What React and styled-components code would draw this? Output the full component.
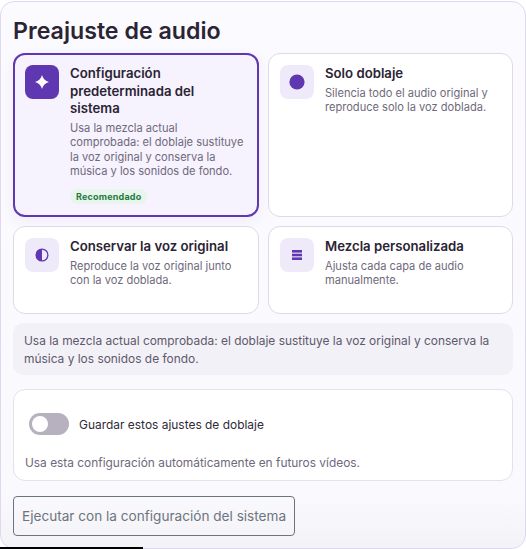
import React from "react";
import styled, { createGlobalStyle } from "styled-components";

const Global = createGlobalStyle`
  html, body { margin: 0; padding: 0; background: #fff; }
  body { font-family: "Inter", "Liberation Sans", sans-serif; width: 526px; height: 549px; overflow: hidden; -webkit-font-smoothing: antialiased; }
`;

const Panel = styled.section`
  position: relative;
  box-sizing: border-box;
  width: 526px;
  height: 548px;
  margin-top: 1px;
  padding: 14px 12px 0 12px;
  border: 1px solid #e0d8f1;
  border-radius: 14px;
  background: linear-gradient(180deg, #fbfaff 0%, #faf9fe 90%, #f3f2f7 100%);
  display: flex;
  flex-direction: column;
`;

const Title = styled.h2`
  margin: 0 0 7px 0;
  font-size: 23.2px;
  line-height: 30px;
  font-weight: 600;
  letter-spacing: 0;
  color: #2a2433;
`;

const Grid = styled.div`
  display: grid;
  grid-template-columns: 246px 245px;
  grid-template-rows: 164px 88px;
  gap: 9px;
`;

const Card = styled.div`
  box-sizing: border-box;
  display: flex;
  gap: 11px;
  padding: ${(p) => (p.$active ? "10px" : "11px")};
  border-radius: 12px;
  background: ${(p) => (p.$active ? "#f6f2fe" : "#ffffff")};
  border: ${(p) => (p.$active ? "2px solid #5f37b0" : "1px solid #dfd9ea")};
  ${(p) => (p.$active ? "box-shadow: 0 4px 14px rgba(95,55,176,0.07);" : "")}
`;

const IconBox = styled.div`
  flex: 0 0 34px;
  width: 34px;
  height: 34px;
  border-radius: 8px;
  display: flex;
  align-items: center;
  justify-content: center;
  background: ${(p) => (p.$active ? "#5f37b0" : "#efeafa")};
  color: ${(p) => (p.$active ? "#ffffff" : "#5f37b0")};
`;

const CardBody = styled.div`
  display: flex;
  flex-direction: column;
  align-items: flex-start;
  min-width: 0;
  flex: 1;
`;

const CardTitle = styled.div`
  font-size: 13.2px;
  line-height: 17.5px;
  font-weight: 600;
  color: #2a2433;
  margin-bottom: 3px;
`;

const CardText = styled.div`
  font-size: 11.08px;
  line-height: 14.6px;
  color: #6f697b;
`;

const Badge = styled.span`
  margin-top: 10px;
  padding: 0 6px;
  height: 15px;
  line-height: 15px;
  border-radius: 8px;
  font-size: 9px;
  font-weight: 700;
  letter-spacing: 0.2px;
  color: #237a3f;
  background: #e8f5ec;
`;

const Note = styled.div`
  box-sizing: border-box;
  margin-top: 9px;
  height: 52px;
  padding: 9px 11px;
  border-radius: 10px;
  background: #f3f1f8;
  font-size: 11.93px;
  line-height: 18px;
  color: #5f596b;
`;

const SaveCard = styled.div`
  box-sizing: border-box;
  margin-top: 14px;
  height: 92px;
  padding: 23px 11px 0 11px;
  border: 1px solid #e5e0ee;
  border-radius: 12px;
  background: #fff;
`;

const SaveRow = styled.label`
  display: flex;
  align-items: center;
  gap: 10px;
  padding-left: 4px;
  height: 22px;
  font-size: 11.95px;
  color: #2f2a38;
`;

const Track = styled.span`
  box-sizing: border-box;
  width: 40px;
  height: 22px;
  padding: 3px;
  border-radius: 11px;
  background: #b6b0bf;
  display: flex;
  align-items: center;
`;

const Knob = styled.span`
  width: 16px;
  height: 16px;
  border-radius: 50%;
  background: #fff;
`;

const SaveHint = styled.div`
  margin-top: 20px;
  font-size: 11.9px;
  line-height: 16px;
  color: #6f697b;
`;

const RunButton = styled.button`
  box-sizing: border-box;
  align-self: flex-start;
  margin-top: 15px;
  width: 282px;
  height: 40px;
  padding: 0 8px;
  border: 1px solid #6c757d;
  border-radius: 4px;
  background: transparent;
  font-family: inherit;
  font-size: 13.6px;
  color: #6c757d;
  white-space: nowrap;
`;

const EdgeBar = styled.div`
  position: absolute;
  left: -1px;
  bottom: -1px;
  width: 143px;
  height: 2px;
  background: #000;
`;

const Sparkle = () => (
  <svg width="16" height="16" viewBox="0 0 16 16" fill="currentColor">
    <path d="M8 1 C8.9 4.6 11.4 7.1 15 8 C11.4 8.9 8.9 11.4 8 15 C7.1 11.4 4.6 8.9 1 8 C4.6 7.1 7.1 4.6 8 1Z" />
  </svg>
);
const Dot = () => (
  <svg width="16" height="16" viewBox="0 0 16 16" fill="currentColor">
    <circle cx="8" cy="8" r="7.6" />
  </svg>
);
const HalfCircle = () => (
  <svg width="14" height="14" viewBox="0 0 14 14">
    <circle cx="7" cy="7" r="5.9" fill="none" stroke="currentColor" strokeWidth="1.3" />
    <path d="M7 1 A6 6 0 0 0 7 13Z" fill="currentColor" />
  </svg>
);
const Bars = () => (
  <svg width="12" height="12" viewBox="0 0 12 12" fill="currentColor">
    <rect x="1" y="1" width="10" height="2.6" />
    <rect x="1" y="4.7" width="10" height="2.6" />
    <rect x="1" y="8.4" width="10" height="2.6" />
  </svg>
);

const presets = [
  {
    icon: <Sparkle />,
    title: "Configuración predeterminada del sistema",
    text: "Usa la mezcla actual comprobada: el doblaje sustituye la voz original y conserva la música y los sonidos de fondo.",
    active: true,
    badge: "Recomendado",
  },
  { icon: <Dot />, title: "Solo doblaje", text: "Silencia todo el audio original y reproduce solo la voz doblada." },
  { icon: <HalfCircle />, title: "Conservar la voz original", text: "Reproduce la voz original junto con la voz doblada." },
  { icon: <Bars />, title: "Mezcla personalizada", text: "Ajusta cada capa de audio manualmente." },
];

export default function App() {
  return (
    <>
      <Global />
      <Panel>
        <Title>Preajuste de audio</Title>
        <Grid>
          {presets.map((p) => (
            <Card key={p.title} $active={p.active}>
              <IconBox $active={p.active}>{p.icon}</IconBox>
              <CardBody>
                <CardTitle>{p.title}</CardTitle>
                <CardText>{p.text}</CardText>
                {p.badge && <Badge>{p.badge}</Badge>}
              </CardBody>
            </Card>
          ))}
        </Grid>
        <Note>Usa la mezcla actual comprobada: el doblaje sustituye la voz original y conserva la música y los sonidos de fondo.</Note>
        <SaveCard>
          <SaveRow>
            <Track><Knob /></Track>
            Guardar estos ajustes de doblaje
          </SaveRow>
          <SaveHint>Usa esta configuración automáticamente en futuros vídeos.</SaveHint>
        </SaveCard>
        <RunButton>Ejecutar con la configuración del sistema</RunButton>
        <EdgeBar />
      </Panel>
    </>
  );
}
